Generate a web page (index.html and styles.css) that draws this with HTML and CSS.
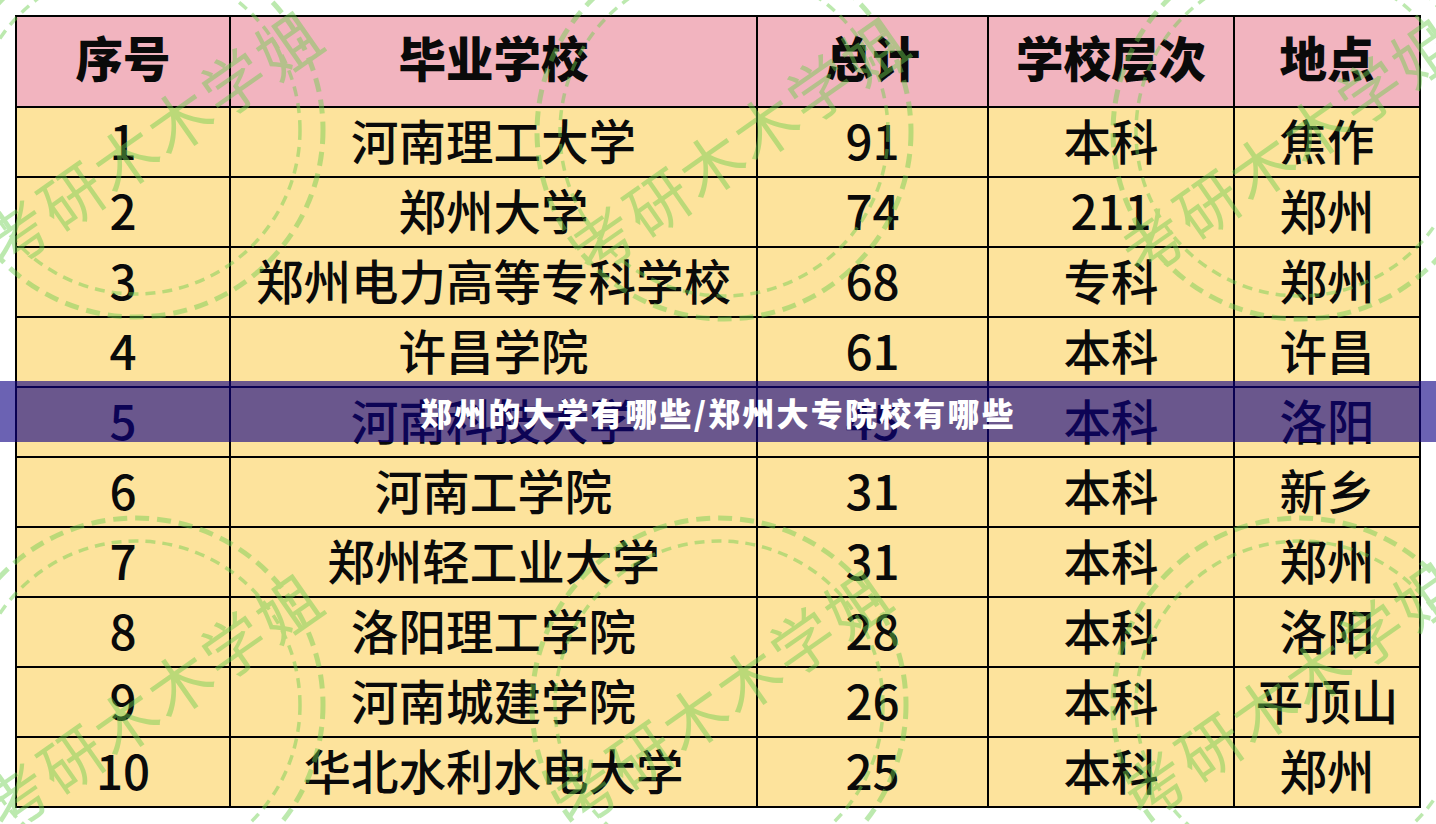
FILE: index.html
```html
<!DOCTYPE html>
<html lang="zh-CN">
<head>
<meta charset="utf-8">
<title>郑州的大学有哪些/郑州大专院校有哪些</title>
<link rel="stylesheet" href="styles.css">
</head>
<body>
<div class="page">
  <div class="grid">
    <div class="cell head">序号</div>
    <div class="cell head">毕业学校</div>
    <div class="cell head">总计</div>
    <div class="cell head">学校层次</div>
    <div class="cell head">地点</div>

    <div class="cell">1</div><div class="cell">河南理工大学</div><div class="cell">91</div><div class="cell">本科</div><div class="cell">焦作</div>
    <div class="cell">2</div><div class="cell">郑州大学</div><div class="cell">74</div><div class="cell">211</div><div class="cell">郑州</div>
    <div class="cell">3</div><div class="cell">郑州电力高等专科学校</div><div class="cell">68</div><div class="cell">专科</div><div class="cell">郑州</div>
    <div class="cell">4</div><div class="cell">许昌学院</div><div class="cell">61</div><div class="cell">本科</div><div class="cell">许昌</div>
    <div class="cell">5</div><div class="cell">河南科技大学</div><div class="cell">45</div><div class="cell">本科</div><div class="cell">洛阳</div>
    <div class="cell">6</div><div class="cell">河南工学院</div><div class="cell">31</div><div class="cell">本科</div><div class="cell">新乡</div>
    <div class="cell">7</div><div class="cell">郑州轻工业大学</div><div class="cell">31</div><div class="cell">本科</div><div class="cell">郑州</div>
    <div class="cell">8</div><div class="cell">洛阳理工学院</div><div class="cell">28</div><div class="cell">本科</div><div class="cell">洛阳</div>
    <div class="cell">9</div><div class="cell">河南城建学院</div><div class="cell">26</div><div class="cell">本科</div><div class="cell">平顶山</div>
    <div class="cell">10</div><div class="cell">华北水利水电大学</div><div class="cell">25</div><div class="cell">本科</div><div class="cell">郑州</div>
  </div>

  <svg class="watermark" width="1436" height="824" viewBox="0 0 1436 824">
    <g transform="translate(136 130)">
      <circle class="ring-outer" r="187"/><circle class="ring-inner" r="164"/>
      <text class="wm-text" transform="translate(16 6) rotate(-35)">考研木木学姐</text>
    </g>
    <g transform="translate(724 132)">
      <circle class="ring-outer" r="187"/><circle class="ring-inner" r="164"/>
      <text class="wm-text" transform="translate(14 10) rotate(-35)">考研木木学姐</text>
    </g>
    <g transform="translate(1300 132)">
      <circle class="ring-outer" r="187"/><circle class="ring-inner" r="164"/>
      <text class="wm-text" transform="translate(-12 12) rotate(-35)">考研木木学姐</text>
    </g>
    <g transform="translate(136 705)">
      <circle class="ring-outer" r="187"/><circle class="ring-inner" r="164"/>
      <text class="wm-text" transform="translate(16 -6) rotate(-35)">考研木木学姐</text>
    </g>
    <g transform="translate(719 705)">
      <circle class="ring-outer" r="187"/><circle class="ring-inner" r="164"/>
      <text class="wm-text" transform="translate(2 -10) rotate(-35)">考研木木学姐</text>
    </g>
    <g transform="translate(1300 705)">
      <circle class="ring-outer" r="187"/><circle class="ring-inner" r="164"/>
      <text class="wm-text" transform="translate(-10 -18) rotate(-35)">考研木木学姐</text>
    </g>
  </svg>

  <div class="banner"><span class="banner-title">郑州的大学有哪些/郑州大专院校有哪些</span></div>
</div>
</body>
</html>
```

FILE: styles.css
```css
html, body {
  margin: 0;
  padding: 0;
  background: #ffffff;
}

.page {
  position: relative;
  width: 1436px;
  height: 824px;
  padding: 15px 0 0 15px;
  box-sizing: border-box;
  overflow: hidden;
  background: #ffffff;
  font-family: "Noto Sans CJK SC", "Noto Sans", sans-serif;
}

.grid {
  display: grid;
  grid-template-columns: 214px 527px 231px 246px 186px;
  grid-template-rows: 91px repeat(10, 70px);
  width: max-content;
  border-left: 2px solid #000;
  border-top: 2px solid #000;
}

.cell {
  box-sizing: border-box;
  display: flex;
  align-items: center;
  justify-content: center;
  border-right: 2px solid #000;
  border-bottom: 2px solid #000;
  background: #fde39c;
  color: #0a0a0a;
  font-size: 47.5px;
  font-weight: 500;
  line-height: 1;
  white-space: nowrap;
  padding-bottom: 5px;
}

.cell.head {
  background: #f2b4bf;
  font-weight: 900;
  padding-bottom: 10px;
}

.watermark {
  position: absolute;
  left: 0;
  top: 0;
  pointer-events: none;
  opacity: 0.45;
}

.ring-outer {
  fill: none;
  stroke: #6ccf4e;
  stroke-width: 5;
  stroke-dasharray: 14 8;
}

.ring-inner {
  fill: none;
  stroke: #6ccf4e;
  stroke-width: 3.5;
  stroke-dasharray: 10 7;
}

.wm-text {
  fill: #6ccf4e;
  font-family: "Noto Sans CJK SC", sans-serif;
  font-size: 63px;
  font-weight: 400;
  letter-spacing: 3px;
  text-anchor: middle;
  dominant-baseline: central;
}

.banner {
  position: absolute;
  left: 0;
  right: 0;
  top: 381px;
  height: 61px;
  display: flex;
  align-items: center;
  justify-content: center;
  background: rgba(16, 2, 132, 0.62);
}

.banner-title {
  color: #ffffff;
  font-family: "Noto Sans CJK SC", sans-serif;
  font-size: 32px;
  font-weight: 900;
  letter-spacing: 2.2px;
  line-height: 1;
}
```
